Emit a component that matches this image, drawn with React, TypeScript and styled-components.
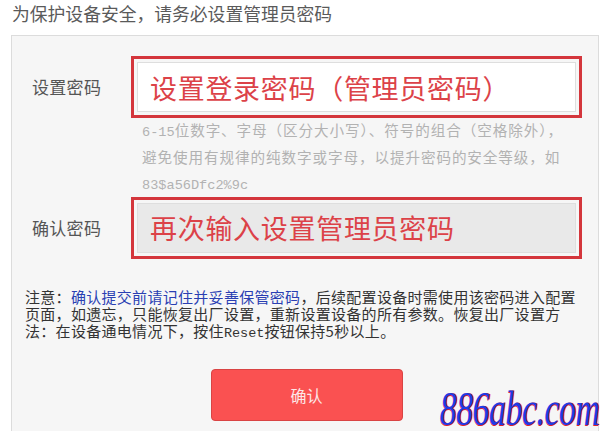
import React from "react";
import styled, { createGlobalStyle } from "styled-components";

const Global = createGlobalStyle`
  html, body { margin: 0; padding: 0; background: #fff; }
  body { font-family: "Noto Sans CJK SC", "Liberation Sans", sans-serif; width: 612px; height: 431px; overflow: hidden; position: relative; }
`;

const Page = styled.div`
  position: relative;
  width: 612px;
  height: 431px;
  overflow: hidden;
`;

const Title = styled.div`
  font-size: 17.8px;
  line-height: 26px;
  color: #5a5a5a;
  padding-left: 12px;
`;

const Panel = styled.div`
  margin: 9px 0 0 11px;
  width: 588px;
  height: 420px;
  box-sizing: border-box;
  border: 1px solid #dcdcdc;
  background: #f6f6f6;
  padding: 26px 0 0 13px;
`;

const Row = styled.div<{ $gap?: number }>`
  display: flex;
  align-items: center;
  margin-top: ${(p) => p.$gap ?? 0}px;
`;

const Label = styled.div`
  width: 112px;
  padding-left: 7px;
  box-sizing: border-box;
  font-size: 17px;
  color: #555;
  line-height: 24px;
  letter-spacing: 0.3px;
`;

const InputBox = styled.div<{ $disabled?: boolean }>`
  width: 439px;
  height: 50px;
  box-sizing: border-box;
  border: 1px solid #dedede;
  background: ${(p) => (p.$disabled ? "#e9e9e9" : "#ffffff")};
  outline: 3px solid #d4363c;
  outline-offset: 3px;
  display: flex;
  align-items: center;
  padding-left: 12px;
  font-size: 27px;
  color: #dc4248;
  letter-spacing: 0.7px;
  white-space: nowrap;
`;

const Hint = styled.div`
  margin: 5px 0 0 117px;
  font-size: 14.6px;
  color: #b2b2b2;
  letter-spacing: 0.9px;
`;

const HintLine = styled.div`
  height: 26.5px;
  line-height: 26.5px;
  white-space: nowrap;
`;

const HintMono = styled.span`
  font-family: "Liberation Mono", monospace;
  font-size: 13.6px;
  letter-spacing: 0;
  line-height: 1;
`;

const Note = styled.p`
  margin: 35px 0 0 0;
  width: 565px;
  font-size: 15px;
  line-height: 17px;
  color: #333;
  letter-spacing: 0.3px;
`;

const Link = styled.span`
  color: #2a3fb3;
`;

const Mono = styled.span`
  font-family: "Liberation Mono", monospace;
  font-size: 13.5px;
  letter-spacing: 0;
  line-height: 1;
`;

const ButtonRow = styled.div`
  display: flex;
  justify-content: center;
  margin: 29px 0 0 -13px;
`;

const Button = styled.button`
  width: 192px;
  height: 52px;
  border: 1px solid #d94444;
  border-radius: 4px;
  background: #fa5151;
  color: #fde6e6;
  font-family: "Noto Sans CJK SC", sans-serif;
  font-size: 16px;
  margin-left: 3px;
`;

const Watermark = styled.div`
  position: absolute;
  right: 10px;
  bottom: 2px;
  font-family: "Liberation Serif", serif;
  font-style: italic;
  font-size: 48px;
  line-height: 40px;
  letter-spacing: -0.5px;
  color: #1f3be6;
  text-shadow: 1.5px 0 0 #e0242b, 0 1px 0 #e0242b;
  transform: scaleX(0.7);
  transform-origin: right bottom;
  white-space: nowrap;
  padding-right: 4px;
`;

export default function App() {
  return (
    <Page>
      <Global />
      <Title>为保护设备安全，请务必设置管理员密码</Title>
      <Panel>
        <Row>
          <Label>设置密码</Label>
          <InputBox>设置登录密码（管理员密码）</InputBox>
        </Row>
        <Hint>
          <HintLine>
            <HintMono>6-15</HintMono>位数字、字母（区分大小写）、符号的组合（空格除外），
          </HintLine>
          <HintLine>避免使用有规律的纯数字或字母，以提升密码的安全等级，如</HintLine>
          <HintLine>
            <HintMono>83$a56Dfc2%9c</HintMono>
          </HintLine>
        </Hint>
        <Row $gap={6}>
          <Label>确认密码</Label>
          <InputBox $disabled>再次输入设置管理员密码</InputBox>
        </Row>
        <Note>
          注意：<Link>确认提交前请记住并妥善保管密码</Link>，后续配置设备时需使用该密码进入配置页面，如遗忘，只能恢复出厂设置，重新设置设备的所有参数。恢复出厂设置方法：在设备通电情况下，按住<Mono>Reset</Mono>按钮保持5秒以上。
        </Note>
        <ButtonRow>
          <Button>确认</Button>
        </ButtonRow>
      </Panel>
      <Watermark>886abc.com</Watermark>
    </Page>
  );
}
